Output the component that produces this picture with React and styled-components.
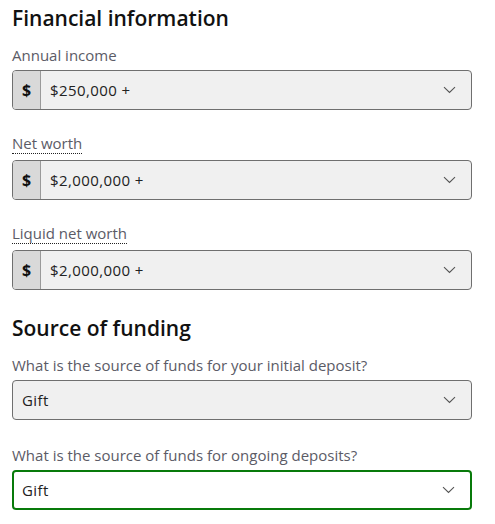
import React from 'react';
import styled, { createGlobalStyle } from 'styled-components';

const GlobalStyle = createGlobalStyle`
  body {
    margin: 0;
    background: #ffffff;
    font-family: 'Open Sans', 'Liberation Sans', sans-serif;
  }
`;

const Page = styled.div`
  display: flex;
  flex-direction: column;
  padding: 5px 23px 0 12px;
`;

const Section = styled.section`
  display: flex;
  flex-direction: column;
  margin-bottom: 25px;
`;

const Heading = styled.h2`
  margin: 0 0 14px 0;
  font-size: 21px;
  line-height: 26px;
  font-weight: 600;
  color: #111111;
`;

const Field = styled.div`
  display: flex;
  flex-direction: column;
  margin-bottom: 25px;

  &:last-child {
    margin-bottom: 0;
  }
`;

const Label = styled.label`
  align-self: flex-start;
  font-size: 15px;
  line-height: ${({ hint }) => (hint ? '17px' : '18px')};
  color: #5b5b66;
  margin-bottom: 6px;
  padding-bottom: ${({ hint }) => (hint ? '1px' : '0')};
  border-bottom: ${({ hint }) => (hint ? '1px dotted #222' : 'none')};
  margin-top: ${({ hint }) => (hint ? '0' : '1px')};
`;

const SelectBox = styled.div`
  display: flex;
  align-items: stretch;
  height: ${({ active }) => (active ? '36px' : '38px')};
  border: ${({ active }) => (active ? '2px solid #087a0a' : '1px solid #6f6f6f')};
  border-radius: 4px;
  background: ${({ active }) => (active ? '#ffffff' : '#f0f0f0')};
  overflow: hidden;
`;

const Prefix = styled.div`
  width: 27px;
  display: flex;
  align-items: center;
  justify-content: center;
  background: #d9d9d9;
  border-right: 1px solid #9a9a9a;
  font-size: 16px;
  font-weight: 700;
  color: #111;
`;

const Value = styled.div`
  flex: 1;
  display: flex;
  align-items: center;
  padding-left: ${({ indent }) => indent}px;
  font-size: 15px;
  letter-spacing: 0.4px;
  color: #222;
`;

const Chevron = styled.div`
  width: 44px;
  display: flex;
  align-items: center;
  justify-content: center;
  color: #555;
`;

const ChevronIcon = () => (
  <svg width="13" height="8" viewBox="0 0 13 8" fill="none">
    <path d="M1 1.2 L6.5 6.5 L12 1.2" stroke="#555" strokeWidth="1.1" />
  </svg>
);

const Select = ({ prefix, value, active }) => (
  <SelectBox active={active}>
    {prefix && <Prefix>{prefix}</Prefix>}
    <Value indent={prefix ? 9 : active ? 8 : 9}>{value}</Value>
    <Chevron>
      <ChevronIcon />
    </Chevron>
  </SelectBox>
);

const financial = [
  { label: 'Annual income', value: '$250,000 +' },
  { label: 'Net worth', value: '$2,000,000 +', hint: true },
  { label: 'Liquid net worth', value: '$2,000,000 +', hint: true },
];

const funding = [
  { label: 'What is the source of funds for your initial deposit?', value: 'Gift' },
  { label: 'What is the source of funds for ongoing deposits?', value: 'Gift', active: true },
];

const App = () => (
  <Page>
    <GlobalStyle />
    <Section>
      <Heading>Financial information</Heading>
      {financial.map((f) => (
        <Field key={f.label}>
          <Label hint={f.hint}>{f.label}</Label>
          <Select prefix="$" value={f.value} />
        </Field>
      ))}
    </Section>
    <Section>
      <Heading>Source of funding</Heading>
      {funding.map((f) => (
        <Field key={f.label}>
          <Label>{f.label}</Label>
          <Select value={f.value} active={f.active} />
        </Field>
      ))}
    </Section>
  </Page>
);

export default App;
